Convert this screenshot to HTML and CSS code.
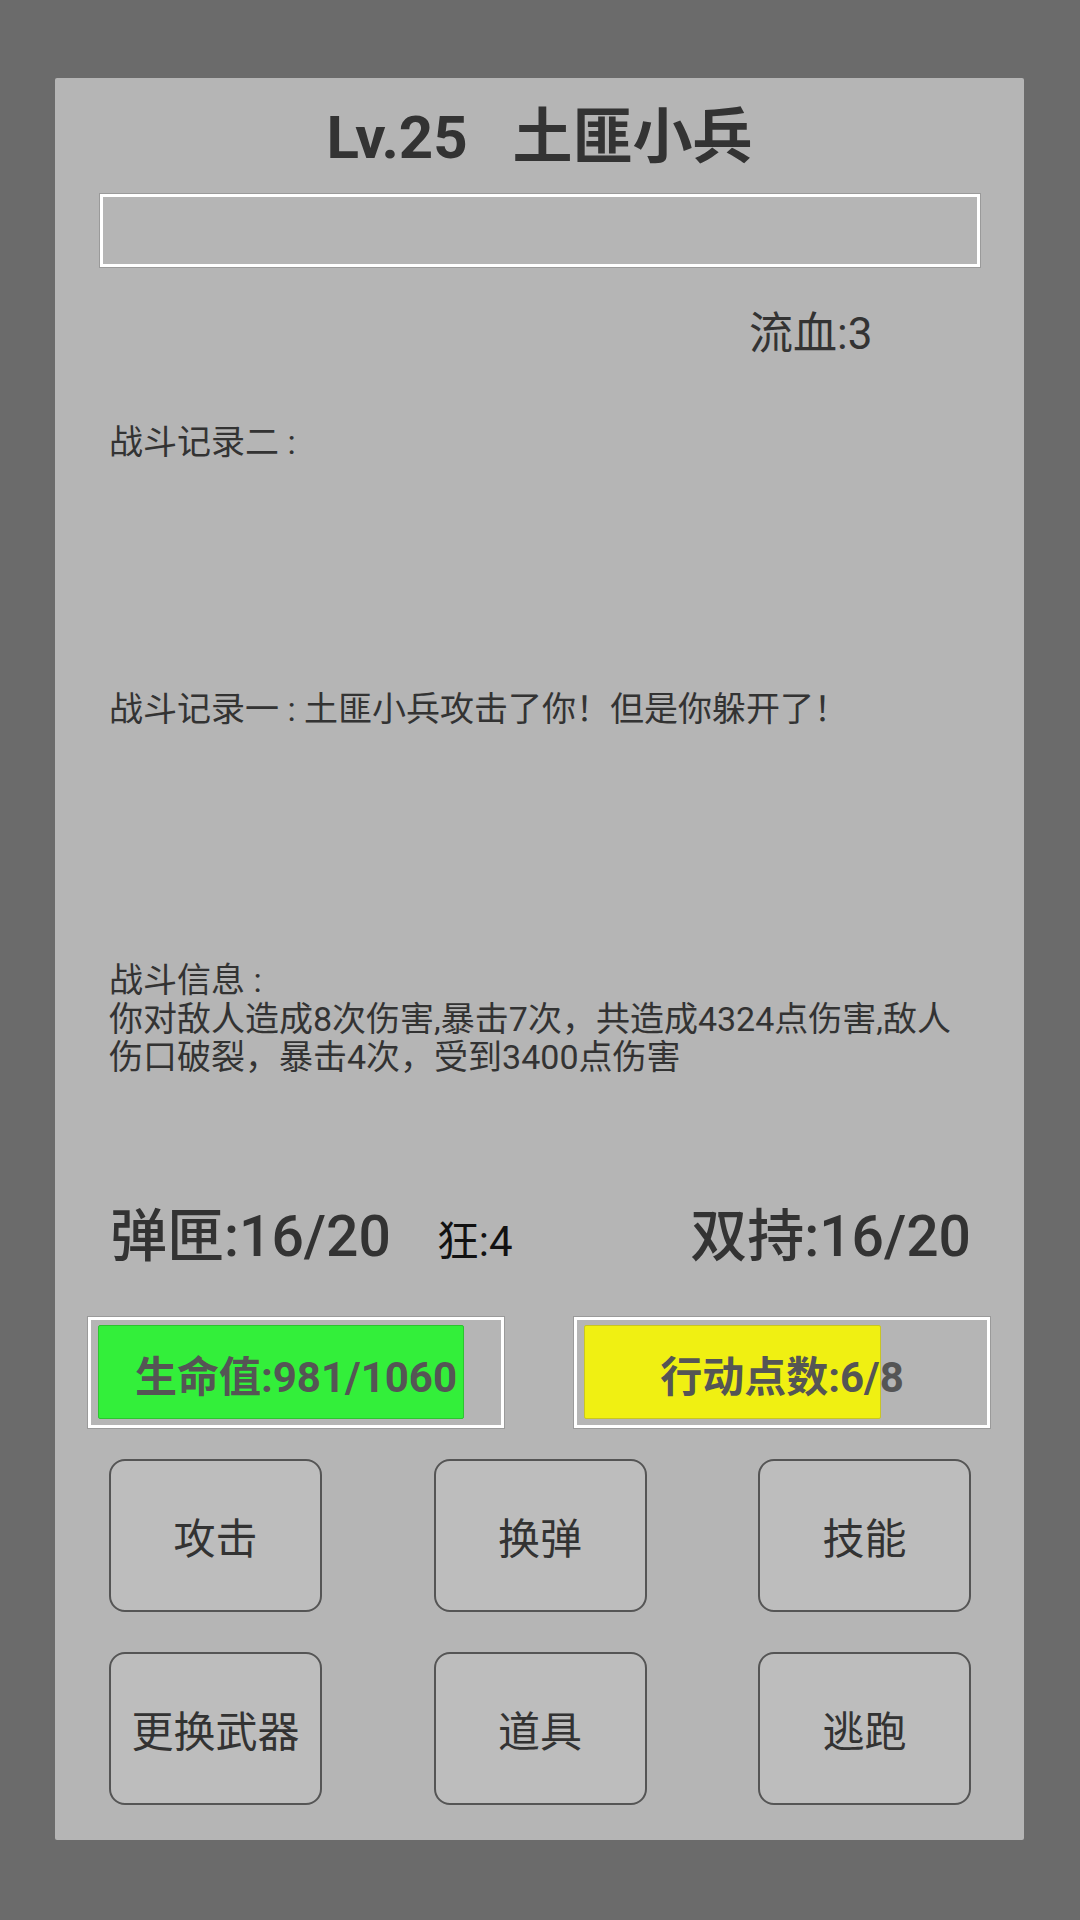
FILE: index.html
```html
<!DOCTYPE html>
<html lang="zh-CN">
<head>
<meta charset="utf-8">
<title>战斗</title>
<link rel="stylesheet" href="styles.css">
</head>
<body>
<div class="panel">
  <div class="title">Lv.25   土匪小兵</div>
  <div class="enemy-box"></div>
  <div class="status">流血:3</div>
  <div class="log log-two">战斗记录二 : </div>
  <div class="log log-one">战斗记录一 : 土匪小兵攻击了你！但是你躲开了！</div>
  <div class="log log-info">战斗信息 : <br>你对敌人造成8次伤害,暴击7次，共造成4324点伤害,敌人伤口破裂，暴击4次，受到3400点伤害</div>
  <div class="stats">
    <span class="stat">弹匣:16/20</span>
    <span class="rage">狂:4</span>
    <span class="stat stat-right">双持:16/20</span>
  </div>
  <div class="bars">
    <div class="bar">
      <div class="track">
        <div class="fill fill-hp" style="width:92.5%"></div>
        <span class="bar-text">生命值:981/1060</span>
      </div>
    </div>
    <div class="bar">
      <div class="track">
        <div class="fill fill-ap" style="width:75%"></div>
        <span class="bar-text">行动点数:6/8</span>
      </div>
    </div>
  </div>
  <div class="actions">
    <div class="btn">攻击</div>
    <div class="btn">换弹</div>
    <div class="btn">技能</div>
    <div class="btn">更换武器</div>
    <div class="btn">道具</div>
    <div class="btn">逃跑</div>
  </div>
</div>
</body>
</html>
```
FILE: styles.css
```css
html, body {
  margin: 0;
  padding: 0;
}
body {
  background: #6b6b6b;
  width: 1080px;
  height: 1920px;
  font-family: Roboto, "Noto Sans CJK SC", sans-serif;
  color: #333333;
  overflow: hidden;
}
.panel {
  box-sizing: border-box;
  margin: 78px 0 0 55px;
  width: 969px;
  height: 1762px;
  background: #b5b5b5;
  border-radius: 2px;
  padding-top: 24px;
  display: block;
  overflow: hidden;
}
.title {
  height: 72px;
  line-height: 72px;
  text-align: center;
  font-size: 60px;
  font-weight: 700;
  white-space: pre;
  color: #333333;
}
.enemy-box {
  box-sizing: border-box;
  margin: 20px 0 0 45px;
  width: 880px;
  height: 73px;
  border: 3px solid #ffffff;
  box-shadow: 0 0 0 1px #9a9a9a;
}
.status {
  margin: 41px 0 0 694px;
  font-size: 44px;
  line-height: 52px;
  height: 52px;
  color: #333333;
}
.log {
  margin-left: 54px;
  width: 860px;
  font-size: 34px;
  line-height: 38.5px;
  color: #333333;
}
.log-two {
  margin-top: 63px;
  height: 267px;
}
.log-one {
  height: 271px;
}
.log-info {
  height: 116px;
}
.stats {
  margin: 126px 53px 0 55px;
  display: flex;
  align-items: baseline;
  height: 68px;
  line-height: 68px;
}
.stat {
  font-size: 57px;
  font-weight: 500;
  color: #333333;
}
.rage {
  margin-left: 46px;
  font-size: 42px;
  color: #111111;
}
.stat-right {
  margin-left: auto;
}
.bars {
  margin: 46px 0 0 33px;
  display: flex;
  gap: 70px;
}
.bar {
  box-sizing: border-box;
  width: 416px;
  height: 111px;
  border: 3px solid #ffffff;
  box-shadow: 0 0 0 1px #9a9a9a;
  padding: 5px 7px 6px 7px;
}
.track {
  position: relative;
  height: 100%;
  display: flex;
  align-items: center;
  justify-content: center;
}
.fill {
  position: absolute;
  left: 0;
  top: 0;
  bottom: 0;
  box-sizing: border-box;
  border-radius: 2px;
}
.fill-hp {
  background: #33ef3a;
  border: 1px solid #2cc430;
}
.fill-ap {
  background: #f0f012;
  border: 1px solid #c9c522;
}
.bar-text {
  position: relative;
  font-size: 42px;
  font-weight: 700;
  color: #555555;
  margin-top: 2px;
}
.actions {
  margin: 31px 53px 0 54px;
  display: grid;
  grid-template-columns: repeat(3, 213px);
  grid-auto-rows: 153px;
  justify-content: space-between;
  row-gap: 40px;
}
.btn {
  box-sizing: border-box;
  border: 2px solid #555555;
  border-radius: 16px;
  background: #bdbdbd;
  display: flex;
  align-items: center;
  justify-content: center;
  font-size: 42px;
  color: #333333;
}
```
